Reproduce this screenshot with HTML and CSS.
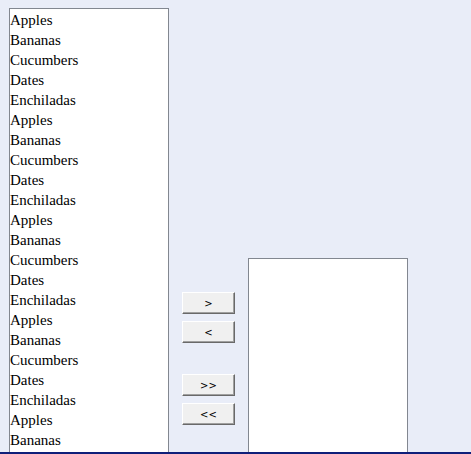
FILE: index.html
```html
<!DOCTYPE html>
<html lang="en">
<head>
    <meta charset="UTF-8">
    <title>Move items</title>
    <link rel="stylesheet" href="styles.css">
</head>
<body>
    <div class="picker">
        <div class="listbox source">
            <div class="item">Apples</div>
            <div class="item">Bananas</div>
            <div class="item">Cucumbers</div>
            <div class="item">Dates</div>
            <div class="item">Enchiladas</div>
            <div class="item">Apples</div>
            <div class="item">Bananas</div>
            <div class="item">Cucumbers</div>
            <div class="item">Dates</div>
            <div class="item">Enchiladas</div>
            <div class="item">Apples</div>
            <div class="item">Bananas</div>
            <div class="item">Cucumbers</div>
            <div class="item">Dates</div>
            <div class="item">Enchiladas</div>
            <div class="item">Apples</div>
            <div class="item">Bananas</div>
            <div class="item">Cucumbers</div>
            <div class="item">Dates</div>
            <div class="item">Enchiladas</div>
            <div class="item">Apples</div>
            <div class="item">Bananas</div>
        </div>

        <div class="controls">
            <div class="group">
                <button class="btn">&gt;</button>
                <button class="btn">&lt;</button>
            </div>
            <div class="group">
                <button class="btn">&gt;&gt;</button>
                <button class="btn">&lt;&lt;</button>
            </div>
        </div>

        <div class="listbox target"></div>
    </div>
</body>
</html>
```

FILE: styles.css
```css
html, body {
    margin: 0;
    padding: 0;
}
body {
    background-color: #e9edf8;
}
.picker {
    display: flex;
    align-items: flex-start;
    height: 444px;
    padding: 8px 0 0 9px;
    overflow: hidden;
    border-bottom: 2px solid #0f1f7a;
}
.listbox {
    width: 160px;
    box-sizing: border-box;
    background-color: #fff;
    border: 1px solid #828790;
}
.source {
    height: 480px;
    padding-top: 1px;
}
.target {
    margin-top: 250px;
    height: 300px;
}
.item {
    font-family: "Times New Roman", "Liberation Serif", "DejaVu Serif", serif;
    font-size: 15px;
    line-height: 20px;
    height: 20px;
    color: #000;
    white-space: nowrap;
}
.controls {
    display: flex;
    flex-direction: column;
    padding: 284px 13px 0 13px;
    gap: 31px;
}
.group {
    display: flex;
    flex-direction: column;
    gap: 7px;
}
.btn {
    width: 53px;
    height: 22px;
    padding: 0;
    margin: 0;
    font-family: "DejaVu Sans", Tahoma, sans-serif;
    font-size: 10px;
    color: #000;
    background-color: #f0f0f0;
    border: 1px solid;
    border-color: #fff #696969 #696969 #fff;
    box-shadow: inset -1px -1px 0 #a0a0a0;
    cursor: pointer;
}
```
